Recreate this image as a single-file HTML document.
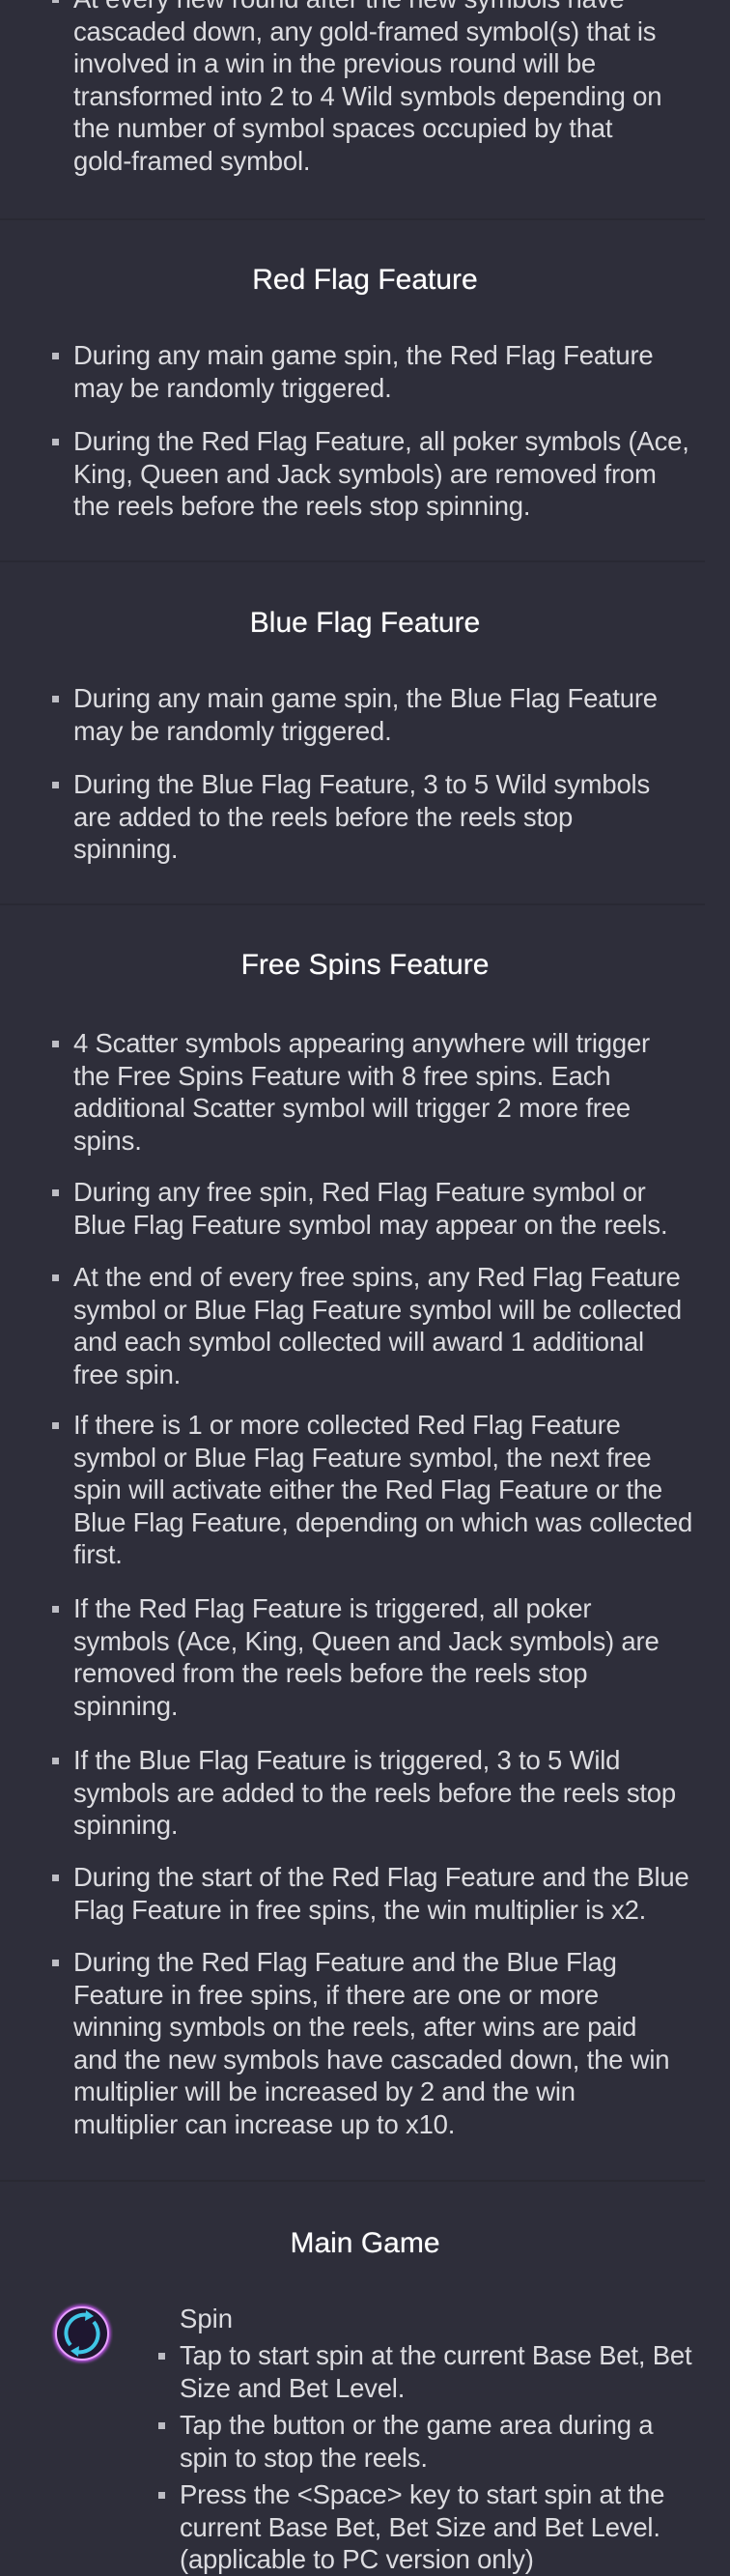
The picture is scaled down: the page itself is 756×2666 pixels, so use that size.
<!DOCTYPE html>
<html><head><meta charset="utf-8"><style>
html,body{margin:0;padding:0;}
body{width:756px;height:2651px;background:#2e2e3a;overflow:hidden;position:relative;font-family:"Liberation Sans",sans-serif;color:#dcdce0;}
.b{position:absolute;left:76px;font-size:27.5px;line-height:33.5px;white-space:nowrap;letter-spacing:-0.2px;}
.b::before{content:"";position:absolute;left:-22px;top:14px;width:7px;height:7px;background:#bdbdc4;}
.p{position:absolute;left:76px;font-size:27.5px;line-height:33.5px;white-space:nowrap;}
.h{position:absolute;left:0;width:756px;text-align:center;font-size:30px;font-weight:normal;line-height:34px;color:#fff;text-shadow:0 0 0.6px #fff;}
.d{position:absolute;left:0;width:730px;height:2px;background:#292933;}
.m{left:186px;}
.m::before{left:-22px;}
</style></head><body>
<div class="b" style="top:-18px">At every new round after the new symbols have<br>cascaded down, any gold-framed symbol(s) that is<br>involved in a win in the previous round will be<br>transformed into 2 to 4 Wild symbols depending on<br>the number of symbol spaces occupied by that<br>gold-framed symbol.</div>
<div class="d" style="top:226px"></div>
<div class="h" style="top:273px">Red Flag Feature</div>
<div class="b" style="top:351px">During any main game spin, the Red Flag Feature<br>may be randomly triggered.</div>
<div class="b" style="top:440px">During the Red Flag Feature, all poker symbols (Ace,<br>King, Queen and Jack symbols) are removed from<br>the reels before the reels stop spinning.</div>
<div class="d" style="top:580px"></div>
<div class="h" style="top:628px">Blue Flag Feature</div>
<div class="b" style="top:706px">During any main game spin, the Blue Flag Feature<br>may be randomly triggered.</div>
<div class="b" style="top:795px">During the Blue Flag Feature, 3 to 5 Wild symbols<br>are added to the reels before the reels stop<br>spinning.</div>
<div class="d" style="top:935px"></div>
<div class="h" style="top:982px">Free Spins Feature</div>
<div class="b" style="top:1063px">4 Scatter symbols appearing anywhere will trigger<br>the Free Spins Feature with 8 free spins. Each<br>additional Scatter symbol will trigger 2 more free<br>spins.</div>
<div class="b" style="top:1217px">During any free spin, Red Flag Feature symbol or<br>Blue Flag Feature symbol may appear on the reels.</div>
<div class="b" style="top:1305px">At the end of every free spins, any Red Flag Feature<br>symbol or Blue Flag Feature symbol will be collected<br>and each symbol collected will award 1 additional<br>free spin.</div>
<div class="b" style="top:1458px">If there is 1 or more collected Red Flag Feature<br>symbol or Blue Flag Feature symbol, the next free<br>spin will activate either the Red Flag Feature or the<br>Blue Flag Feature, depending on which was collected<br>first.</div>
<div class="b" style="top:1648px">If the Red Flag Feature is triggered, all poker<br>symbols (Ace, King, Queen and Jack symbols) are<br>removed from the reels before the reels stop<br>spinning.</div>
<div class="b" style="top:1805px">If the Blue Flag Feature is triggered, 3 to 5 Wild<br>symbols are added to the reels before the reels stop<br>spinning.</div>
<div class="b" style="top:1926px">During the start of the Red Flag Feature and the Blue<br>Flag Feature in free spins, the win multiplier is x2.</div>
<div class="b" style="top:2014px">During the Red Flag Feature and the Blue Flag<br>Feature in free spins, if there are one or more<br>winning symbols on the reels, after wins are paid<br>and the new symbols have cascaded down, the win<br>multiplier will be increased by 2 and the win<br>multiplier can increase up to x10.</div>
<div class="d" style="top:2256px"></div>
<div class="h" style="top:2305px">Main Game</div>
<svg style="position:absolute;left:53px;top:2383px" width="64" height="64" viewBox="0 0 64 64">
<defs><filter id="g"><feGaussianBlur stdDeviation="1.5"/></filter></defs>
<circle cx="32" cy="32" r="27" fill="#1e1730" stroke="#c455f0" stroke-width="5" filter="url(#g)"/>
<circle cx="32" cy="32" r="27" fill="#1e1730" stroke="#e7a0ff" stroke-width="2"/>
<path d="M38 13 A19 19 0 0 0 20 44" fill="none" stroke="#3fc6e6" stroke-width="4"/>
<path d="M36 8 L44 14 L35 19 Z" fill="#3fc6e6"/>
<path d="M26 51 A19 19 0 0 0 44 20" fill="none" stroke="#3fc6e6" stroke-width="4"/>
<path d="M28 56 L20 50 L29 45 Z" fill="#3fc6e6"/>
</svg>
<div class="p" style="left:186px;top:2383px">Spin</div>
<div class="b m" style="top:2421px">Tap to start spin at the current Base Bet, Bet<br>Size and Bet Level.</div>
<div class="b m" style="top:2493px">Tap the button or the game area during a<br>spin to stop the reels.</div>
<div class="b m" style="top:2565px">Press the &lt;Space&gt; key to start spin at the<br>current Base Bet, Bet Size and Bet Level.<br>(applicable to PC version only)</div>
</body></html>
